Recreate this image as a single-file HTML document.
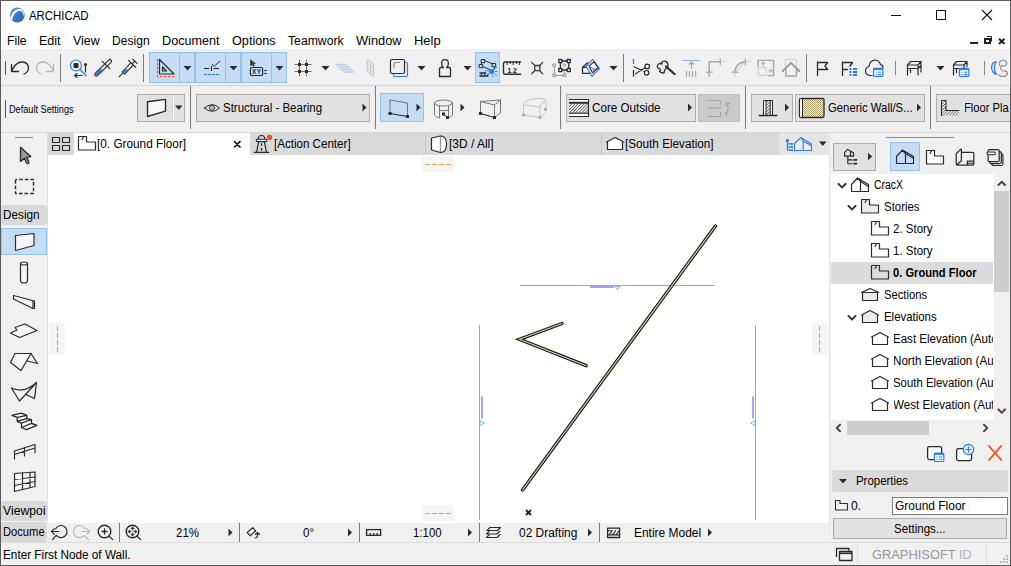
<!DOCTYPE html>
<html><head><meta charset="utf-8"><title>ARCHICAD</title>
<style>
*{box-sizing:border-box;margin:0;padding:0}
html,body{width:1011px;height:566px;overflow:hidden;background:#fff}
body{font-family:"Liberation Sans",sans-serif;font-size:12px;color:#000;position:relative}
.a{position:absolute}
.t{position:absolute;white-space:nowrap;line-height:14px;transform-origin:0 50%}
svg{position:absolute;overflow:visible}
.sel{position:absolute;background:#c5ddf4;border:1px solid #92c4f2}
.btn{position:absolute;background:#e1e1e1;border:1px solid #adadad}
.vsep{position:absolute;width:1px;background:#7a7a7a}
.lbl{position:absolute;background:#d9d9d9;border-radius:3px}
</style></head><body>
<!-- window frame -->
<div class="a" id="win" style="left:0;top:0;width:1011px;height:566px;border:1px solid #5a5a5a;z-index:50;pointer-events:none"></div>

<!-- title bar -->
<div class="a" id="title" style="left:1px;top:1px;width:1009px;height:29px;background:#fff"></div>
<!-- menu bar -->
<div class="a" id="menu" style="left:1px;top:30px;width:1009px;height:19px;background:#fff"></div>
<!-- toolbar 1 -->
<div class="a" id="tb1" style="left:1px;top:49px;width:1008px;height:36px;background:#f0f0f0"></div>
<div class="a" style="left:1px;top:85px;width:1008px;height:1px;background:#d4d4d4"></div>
<!-- toolbar 2 -->
<div class="a" id="tb2" style="left:1px;top:86px;width:1008px;height:45px;background:#f0f0f0"></div>
<div class="a" style="left:1px;top:131px;width:1009px;height:1px;background:#f0f0f0"></div><div class="a" style="left:1px;top:132px;width:1009px;height:1px;background:#d9d9d9"></div>
<!-- left toolbox -->
<div class="a" id="lt" style="left:1px;top:133px;width:47px;height:410px;background:#f0f0f0"></div>
<!-- tab bar -->
<div class="a" id="tabs" style="left:48px;top:133px;width:782px;height:22px;background:#d9d9d9"></div>
<!-- canvas -->
<div class="a" id="cv" style="left:48px;top:155px;width:782px;height:368px;background:#fff"></div>
<!-- bottom bar -->
<div class="a" id="bb" style="left:48px;top:523px;width:782px;height:19px;background:#f0f0f0"></div>
<!-- right panel -->
<div class="a" id="rp" style="left:830px;top:133px;width:180px;height:410px;background:#f0f0f0"></div>
<!-- status bar -->
<div class="a" style="left:1px;top:542px;width:1009px;height:1px;background:#dcdcdc"></div>
<div class="a" id="sb" style="left:1px;top:543px;width:1009px;height:22px;background:#f0f0f0"></div>

<!-- title bar -->
<svg style="left:0;top:0" width="1011" height="50" viewBox="0 0 1011 50" fill="none">
 <defs>
  <linearGradient id="lg" x1="0" y1="0" x2="1" y2="1"><stop offset="0" stop-color="#5aa2e6"/><stop offset="0.550" stop-color="#3475c8"/><stop offset="1" stop-color="#2a5fae"/></linearGradient>
  <clipPath id="lc"><circle cx="17.300" cy="15" r="7.400"/></clipPath>
 </defs>
 <circle cx="17.300" cy="15" r="7.400" fill="url(#lg)"/>
 <path d="M9.600 20.800C10.800 12.500 16 8.400 20.500 8.900C23 9.600 24 12 24 15.500L23.300 15.500C23 12.800 22 11 20 10.700C16.500 10.600 13.200 14 12 21.200z" fill="#fff" clip-path="url(#lc)"/>
 <!-- window controls -->
 <path d="M891 15.500h10" stroke="#111" stroke-width="1"/>
 <rect x="936.500" y="10.500" width="9" height="9" stroke="#111" stroke-width="1"/>
 <path d="M982 10l10 10M992 10l-10 10" stroke="#111" stroke-width="1.100"/>
 <!-- MDI controls -->
 <path d="M970 43h8" stroke="#222" stroke-width="2"/>
 <rect x="985" y="39" width="5" height="4" stroke="#222" stroke-width="2"/><path d="M987 36.500h4.500v5" stroke="#222" stroke-width="1"/>
 <path d="M999 38.800l5.500 5.200M1004.500 38.800l-5.500 5.200" stroke="#222" stroke-width="2"/>
</svg>


<!-- toolbar 1 -->
<div class="a" style="left:5px;top:61px;width:1px;height:14px;background:#555"></div>
<div class="vsep" style="left:60px;top:54px;height:28px"></div>
<div class="vsep" style="left:143px;top:54px;height:28px"></div>
<div class="vsep" style="left:623px;top:54px;height:28px"></div>
<div class="vsep" style="left:806px;top:54px;height:28px"></div>
<div class="vsep" style="left:895px;top:61px;height:14px;background:#8a8a8a"></div>
<div class="vsep" style="left:984px;top:61px;height:14px;background:#8a8a8a"></div>
<div class="sel" style="left:149px;top:52px;width:46px;height:31px"></div>
<div class="sel" style="left:195px;top:52px;width:46px;height:31px"></div>
<div class="sel" style="left:241px;top:52px;width:46px;height:31px"></div>
<div class="a" style="left:179px;top:53px;width:1px;height:29px;background:#92c4f2"></div>
<div class="a" style="left:225px;top:53px;width:1px;height:29px;background:#92c4f2"></div>
<div class="a" style="left:271px;top:53px;width:1px;height:29px;background:#92c4f2"></div>
<div class="sel" style="left:475px;top:52px;width:25px;height:31px"></div>
<svg style="left:0;top:49px" width="1011" height="37" viewBox="0 49 1011 37" fill="none" stroke="#262c31" stroke-width="1.200" stroke-linejoin="round" stroke-linecap="round">
 <!-- undo -->
 <path d="M11.500 64.500v7h7M11.500 71.500q4-10 11.500-9.500q5.500 1 5.500 6q0 4-4.500 6" stroke-width="1.300"/>
 <!-- redo (disabled) -->
 <path d="M53.500 64.500v7h-7M53.500 71.500q-4-10-11.500-9.500q-5.500 1-5.500 6q0 4 4.500 6" stroke="#b9b9b9" stroke-width="1.300"/>
 <!-- find & select -->
 <circle cx="76" cy="65.500" r="5.500" stroke="#2b7cf0"/><path d="M80 69.500l6 6" stroke="#2b7cf0"/>
 <rect x="73.500" y="63" width="5" height="5" rx="1" fill="#262c31" stroke="none"/>
 <path d="M85.500 65v7M75 75.500h7M77 73.500l-2.500 2l2.500 2"/><circle cx="85.500" cy="64.500" r="1.500" fill="#262c31" stroke="none"/>
 <!-- pipette -->
 <defs><clipPath id="cpy"><rect x="90" y="69.200" width="50" height="12"/></clipPath></defs>
 <path d="M96.400 74.400l13.500-13.200" stroke-width="4.400"/>
 <path d="M96.400 74.400l13.500-13.200" stroke="#f0f0f0" stroke-width="2.200"/>
 <path d="M96.400 74.400l13.500-13.200" stroke="#2b7cf0" stroke-width="2.400" clip-path="url(#cpy)"/>
 <path d="M102.200 61.300l7.600 7.400" stroke-width="1.100"/>
 <!-- syringe -->
 <path d="M123 73.400l9-9.500" stroke-width="4.400" stroke-linecap="butt"/>
 <path d="M123.300 73.100l8.700-9.200" stroke="#f0f0f0" stroke-width="2.200" stroke-linecap="butt"/>
 <path d="M123.300 73.100l8.700-9.200" stroke="#2b7cf0" stroke-width="2.400" stroke-linecap="butt" clip-path="url(#cpy)"/>
 <path d="M119.300 76.600l3.200-3.200M128.400 60.300l7.400 7.200M132 63.800l3-3M132.800 59.100l4.200 4.200" stroke-width="1.100"/>
 <!-- triangle ruler -->
 <path d="M159.500 59.500v14.500h14.500zM162.500 67v4h4z"/>
 <path d="M157.500 59v17.500h17.500" stroke="#f4511e" stroke-dasharray="2.500 1.500" stroke-linecap="butt"/>
 <!-- dropdown arrows -->
 <path d="M183.500 66h8l-4 4.500zM229.500 66h8l-4 4.500zM275.500 66h8l-4 4.500zM321.500 66h8l-4 4.500zM417.500 66h8l-4 4.500zM463.500 66h8l-4 4.500zM609.500 66h8l-4 4.500zM936.500 66h8l-4 4.500z" fill="#262c31" stroke="none"/>
 <!-- guide lines -->
 <path d="M204 68.500h5.300M211.500 66v5M213.500 68.500h5.300" stroke-width="1.100" stroke-linecap="butt"/><path d="M212.300 64.300l2 2l5.600-5.200" stroke-width="1"/>
 <path d="M204 74.500h15.500" stroke="#2b7cf0" stroke-dasharray="3 1" stroke-linecap="butt" stroke-width="1.100"/>
 <!-- tracker -->
 <path d="M250.500 60v5.800l1.600-1.400l1.300 2l1-0.600l-1.300-2l2.200-0.300z" fill="#262c31" stroke-width="0.500"/>
 <rect x="250.400" y="67.500" width="12.300" height="8" rx="1.300" stroke-width="1.150" fill="#c5ddf4"/>
 <text x="252" y="74" font-family="Liberation Sans, sans-serif" font-size="6.500" font-weight="bold" fill="#262c31" stroke="none" letter-spacing="0.300">XY</text>
 <path d="M264.300 70.500h2.400M264.300 73.500h2.400" stroke-width="1.100" stroke-linecap="butt"/>
 <!-- grid snap -->
 <path d="M294.500 64.500h17M294.500 71.500h17M299.500 59.500v17M306.500 59.500v17" stroke-width="0.800" stroke="#4a5056" stroke-linecap="butt"/>
 <path d="M298 63h3v3h-3zM305 63h3v3h-3zM298 70h3v3h-3zM305 70h3v3h-3z" fill="#262c31" stroke="none"/>
 <!-- disabled grids -->
 <path d="M336.200 64.300h9.400l8.300 7.900h-9.700z" fill="#e6e8ea" stroke="#a6caf7" stroke-width="1"/>
 <path d="M339.300 64.300l8.100 7.900M342.500 64.300l8.200 7.900M338.900 66.900h9.500M341.600 69.500h9.600" stroke="#c4c7ca" stroke-width="0.800"/>
 <path d="M367.500 59.500l6 4.500v12.300l-6-4.800z" fill="#e6e8ea" stroke="#a6caf7" stroke-width="1"/>
 <path d="M370.500 61.800v12.100M367.500 63.500l6 4.600M367.500 67.500l6 4.700" stroke="#c4c7ca" stroke-width="0.800"/>
 <!-- trace -->
 <rect x="393.500" y="62.500" width="14" height="14" rx="1.500" stroke="#2b7cf0"/>
 <rect x="390.500" y="59.500" width="14" height="14" rx="1.500" fill="#f0f0f0"/>
 <path d="M394 68v-4.500q0-1 1-1h4.500" stroke="#8a9096"/>
 <!-- stamp -->
 <path d="M439.500 76.500v-7.500q0-1.500 1.500-1.500h2.300q-1.700-1.700-1.700-4.100q0-3.700 3.400-3.700t3.400 3.700q0 2.400-1.700 4.100h2.300q1.500 0 1.500 1.500v7.500z" stroke-width="1.300"/>
 <!-- suspend groups (selected) -->
 <path d="M484.500 60.500l8.300 3.400M482.700 66.600l7 2.800M481.500 63v1.500M494.300 67v2.200" stroke-width="1"/>
 <path d="M481.500 59.500h3.200v3.200h-3.200zM492.500 63.500h3.200v3.200h-3.200zM479.500 64.500h3.200v3.200h-3.200z" fill="#c5ddf4" stroke-width="1"/>
 <path d="M479.500 76h9M479.500 73h6.500" stroke-width="1.300" stroke-linecap="butt"/><path d="M480 76l2.700-3M483.300 76l2.700-3M486.500 76l2-2.200" stroke-width="1"/>
 <rect x="489.400" y="69.200" width="4.500" height="4.600" fill="#2b7cf0" stroke="none"/>
 <path d="M494.800 68.600l1.800-1.300M495.200 71.500h2M494.800 74l1.600 1.600M492.300 75l0.600 1.800M485.300 70.800h3.300" stroke="#2b7cf0" stroke-width="0.900"/>
 <!-- ruler -->
 <path d="M520.500 62h-15.500q-1.500 0-1.500 1.500v9.200q0 1.500 1.500 1.500h15.500" stroke-width="1.400"/>
 <path d="M507.100 62v3M510.200 62v2M513.200 62v3M516.400 62v2M519.300 62v3" stroke-width="1" stroke-linecap="butt"/>
 <text x="507.300" y="72.900" font-family="Liberation Sans, sans-serif" font-size="7.500" font-weight="bold" fill="#262c31" stroke="none" letter-spacing="1.300">12</text>
 <!-- x-square -->
 <path d="M531.700 62.300l11 11.500M542.700 62.300l-11 11.500" stroke-width="1.200"/><rect x="534.700" y="65.500" width="5.200" height="5.200" fill="#e4e6e8" stroke="#3a4046" stroke-width="1.300"/>
 <!-- group -->
 <g stroke="#8f959a" stroke-width="0.950"><path d="M554.400 66.300v8M555.600 75.400h8M564.600 71.700v2.500"/><path d="M553.200 64h2.400v2.400h-2.400zM553.200 74.200h2.400v2.400h-2.400zM563.500 74.200h2.400v2.400h-2.400z" fill="#f0f0f0"/><circle cx="564.500" cy="65.300" r="1.300"/></g>
 <path d="M560.400 61h8.400v9h-8.400z" stroke-width="1.300"/><path d="M558.800 59.500h3.100v3.100h-3.100zM567.200 59.500h3.100v3.100h-3.100zM558.800 68.500h3.100v3.100h-3.100zM567.200 68.500h3.100v3.100h-3.100z" fill="#f0f0f0" stroke-width="1.300"/>
 <!-- 3d cutaway -->
 <path d="M587.700 62.700l-5.200 4.600v6h7.700M582.500 67.300h4" stroke-width="1.300"/>
 <path d="M592.600 59.400l6.900 9.300l-7.600 7.600l-5.800-10z" stroke="#2b7cf0" stroke-width="1.200"/>
 <path d="M589.100 65.900l4.900-4.100l4.100 6.200l-5.500 4.900z" stroke-width="1.100"/><path d="M589.100 65.900l4.700 3.500l4.300-1.400M593.800 69.400l-1.200 3.500" stroke="#5d6368" stroke-width="0.900"/>
 <!-- scissors -->
 <path d="M633.500 59v5" stroke="#2b7cf0" stroke-width="1.300" stroke-linecap="butt"/><path d="M633.500 70v6.700" stroke-width="1.300" stroke-linecap="butt"/>
 <path d="M633.800 66.800l10.700 4.700M635.500 73.800l9.300-5.800" stroke-width="1.100"/><circle cx="647.200" cy="66.400" r="2.300" stroke-width="1.200"/><circle cx="646.600" cy="72.800" r="2.300" stroke-width="1.200"/>
 <!-- magic wand / lasso -->
 <path d="M666 66.500l8.500 7.500" stroke-width="2.200"/>
 <path d="M661.500 62.500q1.500-1.500 3.500-1.300q2.500 0.500 3 3.300q0.300 2-1.300 3.500q-1.500 1-2.200 2.500l-0.500 2.500q-2.500 0.200-4.500-1.500l1.200-2.200q-2.500-0.300-3.500-2.300q0.300-2.500 2.300-3.700l2.500 0.700z" stroke-width="1.300"/>
 <!-- disabled: adjust -->
 <g stroke="#a3a8ac" stroke-width="1.100">
 <path d="M691.500 62v6.700M689 64.500l2.500-2.500l2.500 2.500M686.500 71v6M689.500 71v6M692.600 71v6M695.700 71v6" stroke-linecap="butt"/>
 <path d="M709.200 76.300v-14.500h11.100" stroke-width="1.500"/><path d="M720.300 59v5.500M706.700 72.200h5.600" stroke-width="1.300"/><path d="M720.300 61.800h4.500M709.200 72.200v4.300" stroke="#c3c6c9" stroke-width="0.900"/>
 <path d="M734.900 72.200q0.500-9.500 10.400-10.400" stroke-width="1.500"/><path d="M745.300 59v5.500M732.200 72.200h5.600" stroke-width="1.300"/><path d="M745.300 61.800h4.500M734.900 72.200v4.300M735 72l10-10" stroke="#c3c6c9" stroke-width="0.900"/>
 <path d="M758.100 66.300v-5.900h15.500v15.200h-5.500" stroke-width="1.400" stroke-linejoin="miter"/><path d="M763.300 62v4M761.600 63.700l1.700-1.700l1.700 1.700M768.100 70.800h4.200M770.600 69.100l1.700 1.700l-1.700 1.700" stroke-width="1"/>
 <path d="M758.600 67.600h7.400v8h-7.400z" stroke="#c3c6c9" stroke-width="0.900"/>
 <path d="M785.400 67v-7.600h11.100v7.600" stroke="#c9cccf" stroke-width="0.900"/>
 <path d="M785.800 69.500v6.500h10.700v-6.500" stroke-width="1.400"/><path d="M782.800 71l8.200-8.200l8.200 8.200" stroke-width="1.900" stroke="#979ca1"/>
 </g>
 <path d="M682.500 60.500h17" stroke="#8cbcf5" stroke-width="1.100"/>
 <!-- flags -->
 <path d="M817.500 62v13.500M817.500 62.500h10l-2.500 3.500l2.500 3.500h-10" stroke-width="1.300"/>
 <path d="M842.500 62v13.500M842.500 62.500h10l-2.500 3.500M842.500 69.500h5" stroke-width="1.300"/>
 <path d="M849.500 69h2M853 69h4M849.500 72h2M853 72h4M849.500 75h2M853 75h4" stroke="#2b7cf0" stroke-width="1.800" stroke-linecap="butt"/>
 <!-- cloud -->
 <path d="M872 75.500h-2q-4.500-0.500-4.500-4.500q0-3.500 3.500-4.500q0.500-5.500 5.500-6.500q4.500 0 6 4.500q2.500 0.500 2.500 3.500" stroke-width="1.200"/>
 <rect x="873.500" y="68.400" width="9.300" height="8" rx="1" stroke="#2b7cf0" fill="#fff" stroke-width="1.200"/><path d="M873.500 69.200h9.300" stroke="#2b7cf0" stroke-width="1.800" stroke-linecap="butt"/><path d="M875.500 72.200h1M877.800 72.200h3.500M875.500 74.500h1M877.800 74.500h3.500" stroke="#2b7cf0" stroke-width="1" stroke-linecap="butt"/>
 <!-- bench -->
 <path d="M907.500 75v-10l3-3.500h10.500v10.500M907.500 65h10.500l3-3.500M918 65v10M907.500 68.500h10.500M910.500 68.500v4M918 68.500l3-3" stroke-width="1.200"/>
 <path d="M953.500 75v-10l3-3.500h10.500v5M953.500 65h10.500l3-3.500M964 65v3M953.500 68.500h6M956.500 68.500v4" stroke-width="1.200"/>
 <rect x="959.500" y="68.400" width="9.300" height="8" rx="1" stroke="#2b7cf0" fill="#fff" stroke-width="1.200"/><path d="M959.500 69.200h9.300" stroke="#2b7cf0" stroke-width="1.800" stroke-linecap="butt"/><path d="M961.500 72.200h1M963.800 72.200h3.500M961.500 74.500h1M963.800 74.500h3.500" stroke="#2b7cf0" stroke-width="1" stroke-linecap="butt"/>
 <!-- last icon -->
 <path d="M996 61.500q-4.500 1-4.500 6.500q0.500 5 5 6.500q-2.500-3-2-6.500q0.500-4 1.500-6.500z" stroke="#2b7cf0" fill="#cfe2fb"/>
 <path d="M1000 66q-2-3 0.500-5q3-1.500 5 0q2.500 2.500 0 4.500q-2 1-3.500 0q-2 1.500-1 4q1.500 2 4 1.500q2.500 0 2.500 2.500q-1 3-4.500 3t-4.500-2" stroke="#8a9096" stroke-width="1.100"/>

</svg>

<!-- toolbar 2 (info box) -->
<div class="a" style="left:5px;top:100px;width:1px;height:18px;background:#555"></div>
<div class="vsep" style="left:190px;top:86px;height:43px"></div>
<div class="vsep" style="left:375px;top:86px;height:43px"></div>
<div class="vsep" style="left:560px;top:86px;height:43px"></div>
<div class="vsep" style="left:745px;top:86px;height:43px"></div>
<div class="vsep" style="left:930px;top:86px;height:43px"></div>
<div class="btn" style="left:137px;top:94px;width:48px;height:28px"></div>
<div class="a" style="left:173px;top:97px;width:1px;height:22px;background:#fff"></div>
<div class="a" style="left:172px;top:97px;width:1px;height:22px;background:#d2d2d2"></div>
<div class="btn" style="left:196px;top:94px;width:174px;height:28px"></div>
<div class="sel" style="left:380px;top:93px;width:44px;height:29px"></div>
<div class="btn" style="left:566px;top:94px;width:130px;height:28px"></div>
<div class="a" style="left:698px;top:94px;width:42px;height:28px;background:#cacaca;border:1px solid #c0c0c0"></div>
<div class="btn" style="left:751px;top:94px;width:42px;height:28px"></div>
<div class="btn" style="left:795px;top:94px;width:130px;height:28px"></div>
<div class="btn" style="left:936px;top:94px;width:80px;height:28px"></div>
<svg style="left:0;top:86px" width="1009" height="45" viewBox="0 86 1009 45" fill="none" stroke="#262c31" stroke-width="1.200" stroke-linejoin="round" stroke-linecap="round">
 <defs>
  <pattern id="hatch" width="2.200" height="2.200" patternUnits="userSpaceOnUse" patternTransform="rotate(45)"><rect width="2.200" height="2.200" fill="#fff" stroke="none"/><path d="M0.500 0v2.200" stroke="#3a4046" stroke-width="0.750" stroke-linecap="butt"/></pattern>
  <pattern id="dots" width="2" height="2" patternUnits="userSpaceOnUse"><g stroke="none"><rect width="2" height="2" fill="#f8efc8"/><rect width="1" height="1" fill="#b3a46e"/><rect x="1" y="1" width="1" height="1" fill="#b3a46e"/></g></pattern>
 </defs>
 <!-- wall tool icon -->
 <path d="M147.500 101.700l18-2.300v11.800l-18 5.300z" fill="#fafafa" stroke-width="1.400"/>
 <path d="M175 105.500h7.500l-3.750 4.500z" fill="#262c31" stroke="none"/>
 <!-- eye -->
 <path d="M204.500 108q7.500-6.800 15 0q-7.500 6.800-15 0z" stroke-width="1"/><circle cx="212" cy="107.800" r="2.500" stroke-width="1"/><circle cx="212" cy="107.800" r="0.800" fill="#8a9096" stroke="none"/>
 <!-- arrows right -->
 <path d="M362.500 103.500l4 4l-4 4zM416.500 103.500l4 4l-4 4zM460.500 103.500l4 4l-4 4zM688 103.500l4 4l-4 4zM785 103.500l4 4l-4 4zM917 103.500l4 4l-4 4z" fill="#262c31" stroke="none"/>
 <!-- straight wall geometry (selected) -->
 <path d="M390 113v-13l17.500 3v13.500" stroke="#6c7277" stroke-width="0.950"/><path d="M390 113.500l17.500 3" stroke-width="1.200"/>
 <rect x="388.500" y="112" width="3" height="3" fill="#262c31" stroke="none"/><rect x="406" y="115" width="3" height="3" fill="#262c31" stroke="none"/>
 <!-- curved wall -->
 <g stroke="#6c7277" stroke-width="0.950"><ellipse cx="443.500" cy="103" rx="9" ry="3"/><path d="M434.500 103v12q2 2.500 5 3v-12M452.500 103v12q-1.500 2-4 2.500v-11.500M439.500 110.500q4 0.500 9-0.200"/></g>
 <rect x="442" y="112.500" width="3" height="3" fill="#262c31" stroke="none"/><rect x="446" y="116" width="3" height="3" fill="#262c31" stroke="none"/><path d="M443.500 114l4 3.500" stroke-width="1"/>
 <!-- trapezoid wall -->
 <g stroke="#6c7277" stroke-width="0.950"><path d="M480.500 101.500l20-1.500l-6 5v12.500l6-4.500v-13M480.500 101.500l14 3.500M480.500 101.500v12"/></g>
 <path d="M480.500 113.500l14 4" stroke-width="1.300"/><rect x="479" y="112" width="3" height="3" fill="#262c31" stroke="none"/><rect x="493" y="116" width="3" height="3" fill="#262c31" stroke="none"/>
 <!-- polygon wall (disabled) -->
 <g stroke="#bfc2c5" stroke-width="0.950"><path d="M523.500 115v-10q1.500-4.500 5-5l8-1.500q6-0.500 8.500 1q1 1 1 2.500v7.500"/><path d="M523.500 105l16.500 2v10.500M540 107q1-4 5.500-6M523.500 115l16.500 2.500l5-4.500"/></g>
 <g fill="#aeb2b5" stroke="none"><rect x="522" y="113.500" width="3" height="3"/><rect x="538.500" y="116" width="3" height="3"/><rect x="544" y="108" width="3" height="3"/></g>
 <!-- core outside icon -->
 <rect x="569" y="99.500" width="19.500" height="17" fill="#fff" stroke="none"/>
 <rect x="569" y="103.800" width="19.500" height="9" fill="url(#hatch)" stroke="none"/>
 <path d="M569 99.500h19.500v17h-19.500" stroke-width="1.150" stroke-linecap="butt" stroke-linejoin="miter"/>
 <path d="M569 102.800h19.500" stroke-width="2" stroke-linecap="butt"/><path d="M569 113.200h19.500" stroke-width="1.200" stroke-linecap="butt"/>
 <!-- disabled flip icon -->
 <g stroke="#9b9fa3" stroke-width="1"><path d="M708.500 100.500h12v5" stroke-dasharray="2 1.500"/><path d="M708.500 108h12.500M708.500 116.500h12v-4"/>
 <path d="M726.500 103q3.500 4 0 10M726.500 103l-0.500 3M726.500 103l3 0.500M726.500 115l-2-2.500M726.500 115l0.500-3" /></g>
 <!-- wall structure icon -->
 <rect x="763.500" y="100.500" width="9" height="15" fill="#fff" stroke="none"/><rect x="766" y="100.500" width="4.200" height="15" fill="url(#hatch)" stroke="none"/>
 <path d="M763.500 115.500v-15h9v15M766 100.500v15M770.200 100.500v15" stroke-width="1" stroke-linecap="butt"/><path d="M759.300 115.500h17.500" stroke-width="1.300"/>
 <!-- swatch -->
 <rect x="799.500" y="98.500" width="24.500" height="19" rx="1.500" fill="url(#dots)" stroke-width="1.300"/><path d="M802.500 98.500v19" stroke-width="1"/><rect x="800.200" y="99.200" width="1.800" height="17.600" fill="#fff" stroke="none"/>
 <!-- floor plan icon -->
 <path d="M941.500 100.500h4.500v10h13v5h-17.500z" fill="url(#hatch)" stroke="none"/><path d="M941.500 115.500v-15h4.500v10h13" stroke-width="1.100"/>

</svg>

<!-- left toolbox -->
<div class="a" style="left:47px;top:133px;width:1px;height:389px;background:#dedede"></div>
<div class="a" style="left:15px;top:137px;width:18px;height:1px;background:#8c8c8c"></div>
<div class="lbl" style="left:1px;top:205px;width:46px;height:20px"></div>
<div class="sel" style="left:1px;top:228px;width:46px;height:27px"></div>
<div class="lbl" style="left:1px;top:501px;width:46px;height:20px"></div>
<div class="lbl" style="left:1px;top:522px;width:46px;height:20px"></div>
<svg style="left:0;top:0" width="60" height="566" viewBox="0 0 60 566" fill="none" stroke="#262c31" stroke-width="1.200" stroke-linejoin="round" stroke-linecap="round">
 <!-- arrow -->
 <path d="M20.500 147.300v14.200l4-3.200l2 4.700q0.700 1 1.700 0.500t0.600-1.500l-2-4.600l4-0.900z" fill="#8f989d" stroke-width="1.300"/>
 <!-- marquee -->
 <rect x="15.500" y="179.500" width="18" height="14" stroke-dasharray="3.600 2" stroke-dashoffset="1.800" stroke-linecap="butt" stroke-width="1.400"/>
 <!-- wall -->
 <path d="M15.500 235.500l18.500-2v12l-18.500 5z" fill="#f6f6f6"/>
 <!-- column -->
 <path d="M20.500 263.500v17q0 2.500 3.500 2.500t3.500-2.500v-17" fill="#f6f6f6"/><ellipse cx="24" cy="263.500" rx="3.500" ry="1.500" fill="#f6f6f6"/>
 <!-- beam -->
 <path d="M13.500 295.500l21 5.500v7.500l-1.500 0l-19.500-9.500z" fill="#f6f6f6"/><path d="M33 301v7.500"/>
 <!-- slab -->
 <path d="M10.500 333l9 4.500l17.500-7l-12-6.500l-10 3.500l2 2.500z" fill="#f6f6f6"/>
 <!-- roof -->
 <path d="M10.500 362.500l4.500-9h16l-10 17z" fill="#f6f6f6"/><path d="M31 353.500l6.500 10l-10.500-2.500"/>
 <!-- shell -->
 <path d="M11.500 388q12.500 6 25-5.500l-17 18.500z" fill="#f6f6f6"/><path d="M36.500 382.500l-2 16l-8.500-4"/>
 <!-- stair -->
 <path d="M11.900 415.400l9.600-2.200l5.300 2.200l-9.600 2zM17.200 417.400v4l4.300 1.800v4.300l5 2.100l10.300-4.300l-5.300-2v-3.800l-4.700-0.800v-3.300M17.200 421.400l9.600-2.700M21.500 423.200l10-3.700M21.500 427.500l10-4.200" fill="#f8f8f8" stroke-width="1.250"/>
 <!-- railing -->
 <path d="M14.500 459v-8l20.500-6.500v8.500M24.500 456v-8M14.500 454.500l20.500-6.500"/>
 <!-- curtain wall -->
 <path d="M14.500 473.500l20.500-1.500v14.500l-20.500 5z" fill="#f8f8f8"/>
 <path d="M22.500 473v16.500M30 472.500v15M14.500 479.500l20.500-2.500M14.500 485.500l20.500-4"/>
</svg>

<!-- tab bar -->
<div class="a" style="left:74px;top:133px;width:176px;height:22px;background:#fff"></div>
<div class="a" style="left:425px;top:133px;width:1px;height:22px;background:#c6c6c6"></div>
<div class="a" style="left:601px;top:133px;width:1px;height:22px;background:#c6c6c6"></div>
<div class="a" style="left:779px;top:133px;width:51px;height:22px;background:#e6e6e6"></div>
<svg style="left:0;top:130px" width="840" height="30" viewBox="0 130 840 30" fill="none" stroke="#262c31" stroke-width="1.200" stroke-linejoin="round" stroke-linecap="round">
 <!-- quad view -->
 <path d="M52.500 137.500h7v5h-7zM62.500 137.500h7v5h-7zM52.500 145.500h7v5h-7zM62.500 145.500h7v5h-7z"/>
 <!-- story -->
 <path d="M78.500 136.500h8v5.500h9v8h-17zM82 139.500l1.500-2.500"/>
 <!-- close x -->
 <path d="M234.500 141.500l5.500 5.500M240 141.500l-5.500 5.500" stroke="#111" stroke-width="1.700"/>
 <!-- lighthouse -->
 <path d="M258.300 138.800a3.200 3.300 0 0 1 6.400 0" stroke-width="1.200"/>
 <rect x="256.300" y="139.300" width="10.400" height="2.300" rx="0.800" stroke-width="1.100" fill="#ececec"/>
 <path d="M258.600 141.800l-2 10.300M264.400 141.800l2 10.300" stroke-width="1.200"/><path d="M254.300 152.400h14.400" stroke-width="1.300"/>
 <path d="M261.500 143.300v2.700M261.500 148v2.700" stroke-width="1.300" stroke-linecap="butt"/>
 <circle cx="269.600" cy="137.400" r="2.600" fill="#fb4a16" stroke="none"/>
 <!-- 3D -->
 <path d="M431.500 138l9-2v16.500l-9-2.500z" fill="#fff"/><path d="M440.500 136q6 0 6 8.200t-6 8.300" fill="#fff"/>
 <!-- elevation -->
 <path d="M606.500 142l8.500-4.500l8.500 4.500h-1v7.500h-15v-7.500z" fill="#fff"/>
 <!-- nav icon (blue) -->
 <g stroke="#2b7cf0" stroke-width="1.100">
 <path d="M794.500 150.500v-7l6.300-6l10.700 6.500v6.500zM803.200 141v9.500M801.500 138.300l1.700 2.700l8.300 4.800" fill="#ededed"/>
 <path d="M787.400 141.500v8.600h3.300M787.400 143.900h3.300M787.400 147.100h3.300"/><rect x="786" y="139.200" width="2.800" height="2.800" fill="#2b7cf0" stroke="none"/>
 <path d="M790.700 143.900h2.300M790.700 147.100h2.300M790.700 150.100h2.300" stroke-width="1.900" stroke-linecap="butt"/>
 </g>
 <path d="M819 141.500h7.500l-3.750 4.500z" fill="#262c31" stroke="none"/>
</svg>

<!-- canvas -->
<div class="a" style="left:49px;top:323px;width:16px;height:32px;background:#f5f5f5;border-radius:0 3px 3px 0"></div>
<div class="a" style="left:812px;top:323px;width:16px;height:32px;background:#f5f5f5;border-radius:3px 0 0 3px"></div>
<div class="a" style="left:422px;top:156px;width:32px;height:16px;background:#f5f5f5;border-radius:0 0 3px 3px"></div>
<div class="a" style="left:422px;top:505px;width:32px;height:16px;background:#f5f5f5;border-radius:3px 3px 0 0"></div>
<svg style="left:48px;top:155px" width="782" height="367" viewBox="48 155 782 367" fill="none">
 <g stroke="#f5a248" stroke-width="1.200" stroke-dasharray="5 2">
  <path d="M57.500 326v26M819.500 326v26M425 164.500h26M425 513.500h26"/>
 </g>
 <g stroke="#6cb4f7" stroke-width="1">
  <path d="M520 285.500h195M479.500 325v195M755.500 325v195"/>
  <path d="M615 286.500h5l-2.500 3.500zM480 420.500v5l4.500-2.500zM755 420.500v5l-4.500-2.500z" stroke-width="0.900" fill="#fff"/>
 </g>
 <g stroke="#a9a3f3" stroke-width="2">
  <path d="M590 287h24M482 396.500v22M753 396.500v22"/>
 </g>
 <!-- walls -->
 <g stroke-linecap="round" stroke-linejoin="miter">
  <path d="M715.500 226l-193 264" stroke="#1a1a1a" stroke-width="3.400"/>
  <path d="M715.500 226l-193 264" stroke="#dccfa8" stroke-width="1.200"/>
  <path d="M562 323.500L519.500 339.300L586.200 365.700" stroke="#1a1a1a" stroke-width="3.400"/>
  <path d="M562 323.500L519.500 339.300L586.200 365.700" stroke="#dccfa8" stroke-width="1.200"/>
 </g>
 <path d="M526 510l5 5M531 510l-5 5" stroke="#222" stroke-width="1.800"/>
</svg>

<!-- bottom bar -->
<div class="vsep" style="left:119px;top:523px;height:19px"></div>
<div class="vsep" style="left:239px;top:523px;height:19px"></div>
<div class="vsep" style="left:359px;top:523px;height:19px"></div>
<div class="vsep" style="left:479px;top:523px;height:19px"></div>
<div class="vsep" style="left:599px;top:523px;height:19px"></div>
<svg style="left:0;top:520px" width="840" height="26" viewBox="0 520 840 26" fill="none" stroke="#262c31" stroke-width="1.200" stroke-linejoin="round" stroke-linecap="round">
 <!-- zoom prev -->
 <path d="M55.600 528.900A6 6 0 1 1 56.400 535.400M51.500 531.500h7.500M54.300 528.700l-2.800 2.800l2.800 2.800M56.200 535.400l-3.700 4.300"/>
 <!-- zoom next (disabled) -->
 <g stroke="#b7babd"><path d="M84.900 528.900A6 6 0 1 0 84.100 535.400M89.500 531.500h-7.500M86.700 528.700l2.800 2.800l-2.800 2.800M85 536.200l3.700 3.500"/></g>
 <!-- zoom in -->
 <circle cx="104.500" cy="531.500" r="6.300" stroke-width="1.400"/><path d="M102 531.500h5M104.500 529v5M109.100 536.200l3.600 3.400" stroke-width="1.300"/>
 <!-- fit -->
 <circle cx="132.500" cy="531.500" r="6.300" stroke-width="1.400"/><path d="M137.100 536.200l3.600 3.400" stroke-width="1.300"/>
 <path d="M132.500 526.800l-1.600 2.200h3.200zM132.500 536.200l-1.600-2.200h3.200zM127.800 531.500l2.200-1.600v3.200zM137.200 531.500l-2.200-1.600v3.200z" fill="#262c31" stroke-width="0.400"/>
 <path d="M132.500 528.500v1.500M132.500 533v1.500M129.500 531.500h1.500M134 531.500h1.500" stroke-width="0.900"/>
 <!-- arrows -->
 <path d="M228.500 528.500l4 4l-4 4zM348 528.500l4 4l-4 4zM468 528.500l4 4l-4 4zM588 528.500l4 4l-4 4zM708 528.500l4 4l-4 4z" fill="#262c31" stroke="none"/>
 <!-- rotate icon -->
 <path d="M247.200 532.500l5.500-4.800l3 3.300l-5.500 4.800zM255.300 538q2.200-0.300 2.200-2.500v-3M255.500 534.500l2-2l2 2" stroke-width="1.150"/>
 <!-- scale icon -->
 <path d="M366.600 529.600h14v5.800h-14zM370.100 535.500v-2.500M373.600 535.500v-2.500M377.100 535.500v-2.500" stroke-width="1.400" stroke-linecap="butt"/>
 <!-- layers -->
 <path d="M490 527.500h10.500l-3 3h-10.500zM489 531.500l-2.500 2.500h10.500l3-3M489 535l-2.500 2.500h10.500l3-3" stroke-width="1.100"/>
 <!-- model filter icon -->
 <path d="M607.600 528.200h12v9.300h-12z" stroke-width="1.300"/><path d="M607.600 534.800h12M607.600 530.700h3.500M609.300 534.500l3-4M612.800 534.500l3-4M616.300 534.500l3-4" stroke-width="1.150"/>
</svg>

<!-- right panel -->
<div class="a" style="left:829px;top:133px;width:1px;height:410px;background:#e6e6e6"></div>
<div class="a" style="left:886px;top:137px;width:68px;height:1px;background:#8c8c8c"></div>
<div class="btn" style="left:833px;top:143px;width:43px;height:28px"></div>
<div class="sel" style="left:890px;top:142px;width:30px;height:29px"></div>
<!-- tree -->
<div class="a" style="left:831px;top:174px;width:163px;height:246px;background:#fff"></div>
<div class="a" style="left:831px;top:262px;width:162px;height:22px;background:#dcdcdc"></div>
<!-- v scrollbar -->
<div class="a" style="left:994px;top:191px;width:15px;height:101px;background:#cdcdcd"></div>
<!-- h scrollbar -->
<div class="a" style="left:847px;top:421px;width:82px;height:14px;background:#cdcdcd"></div>
<!-- properties -->
<div class="a" style="left:832px;top:470px;width:176px;height:22px;background:#dadada;border-radius:3px"></div>
<div class="a" style="left:892px;top:497px;width:116px;height:18px;background:#fff;border:1px solid #7a7a7a"></div>
<div class="btn" style="left:833px;top:518px;width:174px;height:21px"></div>
<svg style="left:0;top:0" width="1011" height="566" viewBox="0 0 1011 566" fill="none" stroke="#262c31" stroke-width="1.2" stroke-linejoin="round" stroke-linecap="round">
 <!-- project chooser icon -->
 <path d="M844.600 156.100v-3.800l3-2.900l5.900 3.400v3.300zM850.500 151.500v4.500M847.800 156.100v7.600h4.400M847.800 159.900h4.400" stroke-width="1.150"/>
 <path d="M853.500 159.900h3.600M853.500 163.700h3.600" stroke-width="1.700" stroke-linecap="butt"/>
 <path d="M868 152.800l4.200 3.700l-4.200 3.700z" fill="#262c31" stroke="none"/>
 <!-- house (selected) -->
 <path d="M896.500 163.500v-7l6-6.500l11 6.500v7zM905.500 153.500v10M902.500 150l3 3.500l8 5"/>
 <!-- story -->
 <path d="M926.500 150.500h8v5.500h9v8h-17z" fill="#fbfbfb"/><path d="M930 153.500l1.500-2.500"/>
 <!-- layout book -->
 <path d="M961.400 152.300h11q1.400 0 1.400 1.400v10.100q0 1.400-1.400 1.400h-15q-1.200 0-1.200-1.200v-9.500q0-0.700 0.500-1.300l3.600-3.600q1.100-0.900 1.100 0.500v10.700l-4.500 4M967.300 161.200h6.500M967.300 161.200v4" stroke-width="1.250"/>
 <path d="M967.300 163.300h6.500" stroke-width="1.100"/>
 <!-- publisher -->
 <path d="M989.500 149.600h8.300q1.400 0 1.400 1.400v9.200q0 1.400-1.400 1.400h-8.300q-1.400 0-1.400-1.400v-4.700M988.100 152v-1q0-1.400 1.400-1.400" stroke-width="1.250"/>
 <rect x="987" y="152" width="8.300" height="2.700" rx="1.200" stroke-width="1.150" fill="#f0f0f0"/>
 <path d="M999.200 151.600q2.100 0 2.100 1.800v8.700q0 1.500-1.500 1.500h-8.300q-1.200 0-1.700-1.200M1001.300 153.500q1.600 0.200 1.600 1.800v8.700q0 1.500-1.500 1.500h-8q-1.200 0-1.700-1.200" stroke-width="1.200"/>
 <!-- tree chevrons -->
 <path d="M838.500 184l3.500 3.500l3.500-3.500M848.500 206l3.500 3.500l3.500-3.500M848.500 316l3.500 3.500l3.500-3.500" stroke-width="1.900" stroke="#333" stroke-linecap="square" stroke-linejoin="miter"/>
 <!-- CracX house -->
 <path d="M851.500 191.500v-7l6-6.500l11 6.500v7zM860.500 181.500v10M857.500 178l3 3.500l8 5"/>
 <!-- Stories folder -->
 <path d="M861.500 199.500h8v5.500h9v8h-17z" fill="#ececec"/><path d="M865 202.500l1.500-2.500"/>
 <!-- stories -->
 <path d="M871.500 221.500h8v5.500h9v8h-17zM875 224.500l1.500-2.500"/>
 <path d="M871.500 243.500h8v5.500h9v8h-17zM875 246.500l1.500-2.500"/>
 <path d="M871.500 265.500h8v5.500h9v8h-17zM875 268.500l1.500-2.500"/>
 <!-- sections -->
 <path d="M862.500 292.500v8h15v-8" fill="#ececec"/><path d="M861.500 292.500l8.500-4l8.500 4z"/>
 <!-- elevations folder -->
 <path d="M861.500 315l8.500-4.500l8.500 4.500h-1v7.500h-15v-7.500z" fill="#ececec"/>
 <!-- elevation items -->
 <path d="M871.500 337l8.500-4.500l8.500 4.500h-1v7.500h-15v-7.500z"/>
 <path d="M871.500 359l8.500-4.500l8.500 4.500h-1v7.500h-15v-7.500z"/>
 <path d="M871.500 381l8.500-4.500l8.500 4.500h-1v7.500h-15v-7.500z"/>
 <path d="M871.500 403l8.500-4.500l8.500 4.500h-1v7.500h-15v-7.500z"/>
 <!-- scroll arrows -->
 <path d="M998.500 185l3.250-3.250l3.250 3.250M998.500 409.500l3.250 3.250l3.250-3.250M840 424.750l-3.250 3.250l3.250 3.250M984 424.750l3.250 3.250l-3.250 3.250" stroke-width="1.900" stroke="#444" stroke-linecap="square" stroke-linejoin="miter"/>
 <!-- bottom icons -->
 <rect x="927.600" y="446.600" width="14" height="13" rx="1.800" fill="#fdfdfd" stroke-width="1.300"/>
 <rect x="934.500" y="453.200" width="9.300" height="8.300" rx="1" stroke="#2b7cf0" fill="#fff" stroke-width="1.200"/>
 <path d="M934.500 454h9.300" stroke="#2b7cf0" stroke-width="1.800" stroke-linecap="butt"/>
 <path d="M936.500 457h1M938.800 457h3.500M936.500 459.300h1M938.800 459.300h3.500" stroke="#2b7cf0" stroke-width="1" stroke-linecap="butt"/>
 <rect x="956.600" y="448.600" width="15" height="12" rx="1.800" fill="#fdfdfd" stroke-width="1.300"/>
 <circle cx="968.500" cy="449.500" r="5.200" stroke="#2b7cf0" fill="#f0f0f0" stroke-width="1.200"/>
 <path d="M965.700 449.500h5.600M968.500 446.700v5.600" stroke="#2b7cf0" stroke-width="1.100"/>
 <path d="M989 446l12.200 14M1001.200 446l-12.200 14" stroke="#f4511e" stroke-width="1.900"/>
 <!-- properties triangle -->
 <path d="M839 479h8l-4 4.500z" fill="#262c31" stroke="none"/>
 <!-- prop story icon -->
 <path d="M835.500 500.500h4.500v3h7.500v6.500h-12z" stroke-width="1.100"/>
</svg>

<!-- status bar -->
<div class="a" style="left:857px;top:544px;width:1px;height:20px;background:#dcdcdc"></div>
<div class="a" style="left:986px;top:544px;width:1px;height:20px;background:#dcdcdc"></div>
<svg style="left:830px;top:544px" width="181" height="22" viewBox="830 544 181 22" fill="none" stroke="#262c31" stroke-width="1.300" stroke-linejoin="round">
 <path d="M836.500 557v-8.500h12.500v2.500"/><rect x="839.500" y="551.500" width="12.500" height="9" fill="#f0f0f0"/><path d="M839.500 553.300h12.500" stroke-width="1.600"/>
 <g fill="#b8b8b8" stroke="none"><rect x="1006" y="555" width="2" height="2"/><rect x="1003" y="558" width="2" height="2"/><rect x="1006" y="558" width="2" height="2"/><rect x="1000" y="561" width="2" height="2"/><rect x="1003" y="561" width="2" height="2"/><rect x="1006" y="561" width="2" height="2"/></g>
</svg>

<span class="t" style="left:29.2px;top:7.5px;font-size:12px;line-height:16px;transform:scaleX(0.9510);">ARCHICAD</span>
<span class="t" style="left:7.2px;top:33.0px;font-size:12px;line-height:16px;transform:scaleX(1.0132);">File</span>
<span class="t" style="left:39.2px;top:33.0px;font-size:12px;line-height:16px;transform:scaleX(1.0441);">Edit</span>
<span class="t" style="left:73.2px;top:33.0px;font-size:12px;line-height:16px;transform:scaleX(1.0311);">View</span>
<span class="t" style="left:112.2px;top:33.0px;font-size:12px;line-height:16px;transform:scaleX(1.0064);">Design</span>
<span class="t" style="left:162.2px;top:33.0px;font-size:12px;line-height:16px;transform:scaleX(1.0530);">Document</span>
<span class="t" style="left:232.2px;top:33.0px;font-size:12px;line-height:16px;transform:scaleX(1.0542);">Options</span>
<span class="t" style="left:288.2px;top:33.0px;font-size:12px;line-height:16px;transform:scaleX(1.0167);">Teamwork</span>
<span class="t" style="left:356.2px;top:33.0px;font-size:12px;line-height:16px;transform:scaleX(1.0682);">Window</span>
<span class="t" style="left:414.2px;top:33.0px;font-size:12px;line-height:16px;transform:scaleX(1.0775);">Help</span>
<span class="t" style="left:9.2px;top:101.5px;font-size:10px;line-height:16px;transform:scaleX(0.9149);">Default Settings</span>
<span class="t" style="left:223.2px;top:100.0px;font-size:12px;line-height:16px;transform:scaleX(0.9585);">Structural - Bearing</span>
<span class="t" style="left:591.7px;top:100.0px;font-size:12px;line-height:16px;transform:scaleX(0.9703);">Core Outside</span>
<span class="t" style="left:828.2px;top:100.0px;font-size:12px;line-height:16px;transform:scaleX(0.9444);">Generic Wall/S...</span>
<div class="a" style="left:964.5px;top:100.0px;width:44px;height:16px;overflow:hidden"><span class="t" style="left:-0.8px;top:0;font-size:12px;line-height:16px;transform:scaleX(0.9286);">Floor Pla</span></div>
<span class="t" style="left:97.2px;top:136.0px;font-size:12px;line-height:16px;transform:scaleX(0.9822);">[0. Ground Floor]</span>
<span class="t" style="left:273.9px;top:136.0px;font-size:12px;line-height:16px;transform:scaleX(0.9650);">[Action Center]</span>
<span class="t" style="left:449.2px;top:136.0px;font-size:12px;line-height:16px;transform:scaleX(0.9980);">[3D / All]</span>
<span class="t" style="left:625.2px;top:136.0px;font-size:12px;line-height:16px;transform:scaleX(0.9765);">[South Elevation]</span>
<span class="t" style="left:3.2px;top:207.0px;font-size:12px;line-height:16px;transform:scaleX(0.9797);">Design</span>
<span class="t" style="left:3.2px;top:503.0px;font-size:12px;line-height:16px;transform:scaleX(1.0188);">Viewpoi</span>
<span class="t" style="left:3.2px;top:524.0px;font-size:12px;line-height:16px;transform:scaleX(0.9309);">Docume</span>
<span class="t" style="left:176.2px;top:525.0px;font-size:12px;line-height:16px;transform:scaleX(0.9612);">21%</span>
<span class="t" style="left:303.0px;top:525.0px;font-size:12px;line-height:16px;transform:scaleX(0.9665);">0°</span>
<span class="t" style="left:413.2px;top:525.0px;font-size:12px;line-height:16px;transform:scaleX(0.9523);">1:100</span>
<span class="t" style="left:519.0px;top:525.0px;font-size:12px;line-height:16px;transform:scaleX(0.9931);">02 Drafting</span>
<span class="t" style="left:634.2px;top:525.0px;font-size:12px;line-height:16px;transform:scaleX(0.9959);">Entire Model</span>
<span class="t" style="left:3.2px;top:547.0px;font-size:12px;line-height:16px;transform:scaleX(0.9795);">Enter First Node of Wall.</span>
<span class="t" style="left:874.2px;top:177.0px;font-size:12px;line-height:16px;transform:scaleX(0.8727);">CracX</span>
<span class="t" style="left:883.7px;top:199.0px;font-size:12px;line-height:16px;transform:scaleX(0.9529);">Stories</span>
<span class="t" style="left:893.2px;top:221.0px;font-size:12px;line-height:16px;transform:scaleX(0.9575);">2. Story</span>
<span class="t" style="left:893.2px;top:243.0px;font-size:12px;line-height:16px;transform:scaleX(0.9575);">1. Story</span>
<span class="t" style="left:893.2px;top:265.0px;font-size:12px;line-height:16px;font-weight:bold;transform:scaleX(0.9289);">0. Ground Floor</span>
<span class="t" style="left:883.7px;top:287.0px;font-size:12px;line-height:16px;transform:scaleX(0.9363);">Sections</span>
<span class="t" style="left:883.7px;top:309.0px;font-size:12px;line-height:16px;transform:scaleX(0.9499);">Elevations</span>
<div class="a" style="left:894px;top:331.0px;width:99px;height:16px;overflow:hidden"><span class="t" style="left:-0.8px;top:0;font-size:12px;line-height:16px;transform:scaleX(0.9620);">East Elevation (Auto</span></div>
<div class="a" style="left:894px;top:353.0px;width:99px;height:16px;overflow:hidden"><span class="t" style="left:-0.8px;top:0;font-size:12px;line-height:16px;transform:scaleX(0.9667);">North Elevation (Au</span></div>
<div class="a" style="left:894px;top:375.0px;width:99px;height:16px;overflow:hidden"><span class="t" style="left:-0.8px;top:0;font-size:12px;line-height:16px;transform:scaleX(0.9484);">South Elevation (Au</span></div>
<div class="a" style="left:894px;top:397.0px;width:99px;height:16px;overflow:hidden"><span class="t" style="left:-0.8px;top:0;font-size:12px;line-height:16px;transform:scaleX(0.9660);">West Elevation (Aut</span></div>
<span class="t" style="left:856.2px;top:473.0px;font-size:12px;line-height:16px;transform:scaleX(0.9524);">Properties</span>
<span class="t" style="left:851.2px;top:498.0px;font-size:12px;line-height:16px;transform:scaleX(1.0084);">0.</span>
<span class="t" style="left:895.2px;top:498.0px;font-size:12px;line-height:16px;transform:scaleX(0.9985);">Ground Floor</span>
<span class="t" style="left:894.2px;top:521.0px;font-size:12px;line-height:16px;transform:scaleX(0.9667);">Settings...</span>
<span class="t" style="left:872.2px;top:546.5px;font-size:13px;line-height:16px;color:#979797;transform:scaleX(0.9892);">GRAPHISOFT</span>
<span class="t" style="left:959.2px;top:546.5px;font-size:13px;line-height:16px;color:#b4b4b4;transform:scaleX(0.9692);">ID</span>
</body></html>
